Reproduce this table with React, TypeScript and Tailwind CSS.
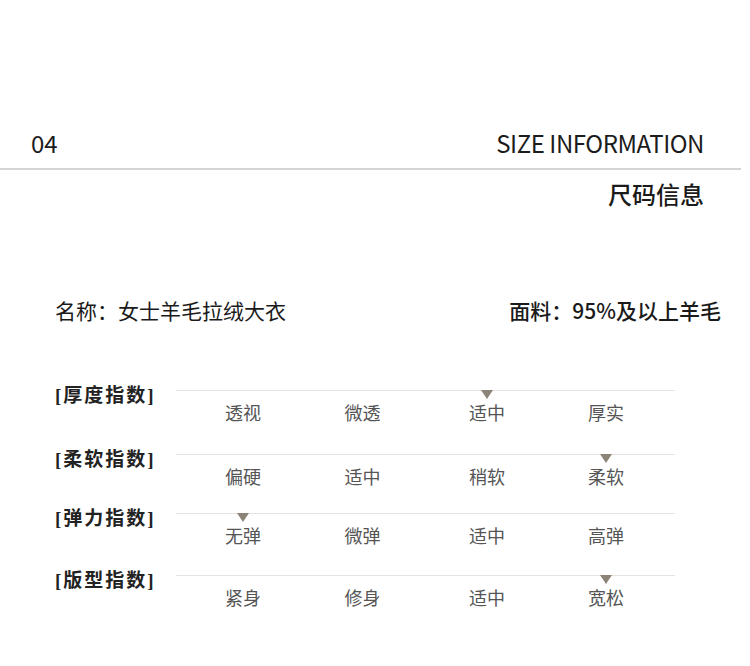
const INDEXES = [
  { label: "厚度指数", options: ["透视", "微透", "适中", "厚实"], pick: 2, h: "h-[64px]" },
  { label: "柔软指数", options: ["偏硬", "适中", "稍软", "柔软"], pick: 3, h: "h-[59px]" },
  { label: "弹力指数", options: ["无弹", "微弹", "适中", "高弹"], pick: 0, h: "h-[62px]" },
  { label: "版型指数", options: ["紧身", "修身", "适中", "宽松"], pick: 3, h: "h-[62px]" },
];

const CJK = "font-['Noto_Sans_CJK_SC',sans-serif]";

export default function App() {
  return (
    <div className={`w-[750px] h-[666px] bg-white overflow-hidden ${CJK}`}>
      {/* ── Header ── */}
      <div className="flex items-center justify-between pt-[127px] pl-[31px] pr-[46px] text-[24px] leading-[32px] text-[#1c1c1c]">
        <span>04</span>
        <span className="tracking-[-0.45px]">SIZE INFORMATION</span>
      </div>
      <div className="mt-[9px] w-[741px] h-[2px] bg-[#d4d4d4]" />
      <div className="mt-[8px] pr-[46px] text-right text-[24px] leading-[32px] font-medium text-[#1a1a1a]">
        尺码信息
      </div>

      {/* ── Product ── */}
      <div className="mt-[86px] flex items-center justify-between pl-[55px] pr-[29px] text-[21px] leading-[28px] text-[#1a1a1a]">
        <span>名称：女士羊毛拉绒大衣</span>
        <span className="font-medium">面料：95%及以上羊毛</span>
      </div>

      {/* ── Index rows ── */}
      <div className="mt-[57px] pl-[55px]">
        {INDEXES.map((row) => (
          <div key={row.label} className={`flex items-start ${row.h}`}>
            <div className="w-[121px] text-[19px] leading-[26px] font-bold tracking-[2px] text-[#222]">
              <span className="font-['Liberation_Serif',serif]">[</span>
              {row.label}
              <span className="font-['Liberation_Serif',serif]">]</span>
            </div>
            <div className="mt-[9px] w-[499px] border-t border-[#e6e3df]">
              <div className="pl-[7px] pt-[8px] grid grid-cols-[120px_119px_130px_108px] text-[18px] leading-[26px] text-[#555]">
                {row.options.map((o, i) => (
                  <div key={o} className="relative text-center">
                    {i === row.pick && (
                      <div className="absolute -top-[9px] left-1/2 -translate-x-1/2 w-0 h-0 border-x-[6px] border-x-transparent border-t-[9px] border-t-[#8c8478]" />
                    )}
                    {o}
                  </div>
                ))}
              </div>
            </div>
          </div>
        ))}
      </div>
    </div>
  );
}
